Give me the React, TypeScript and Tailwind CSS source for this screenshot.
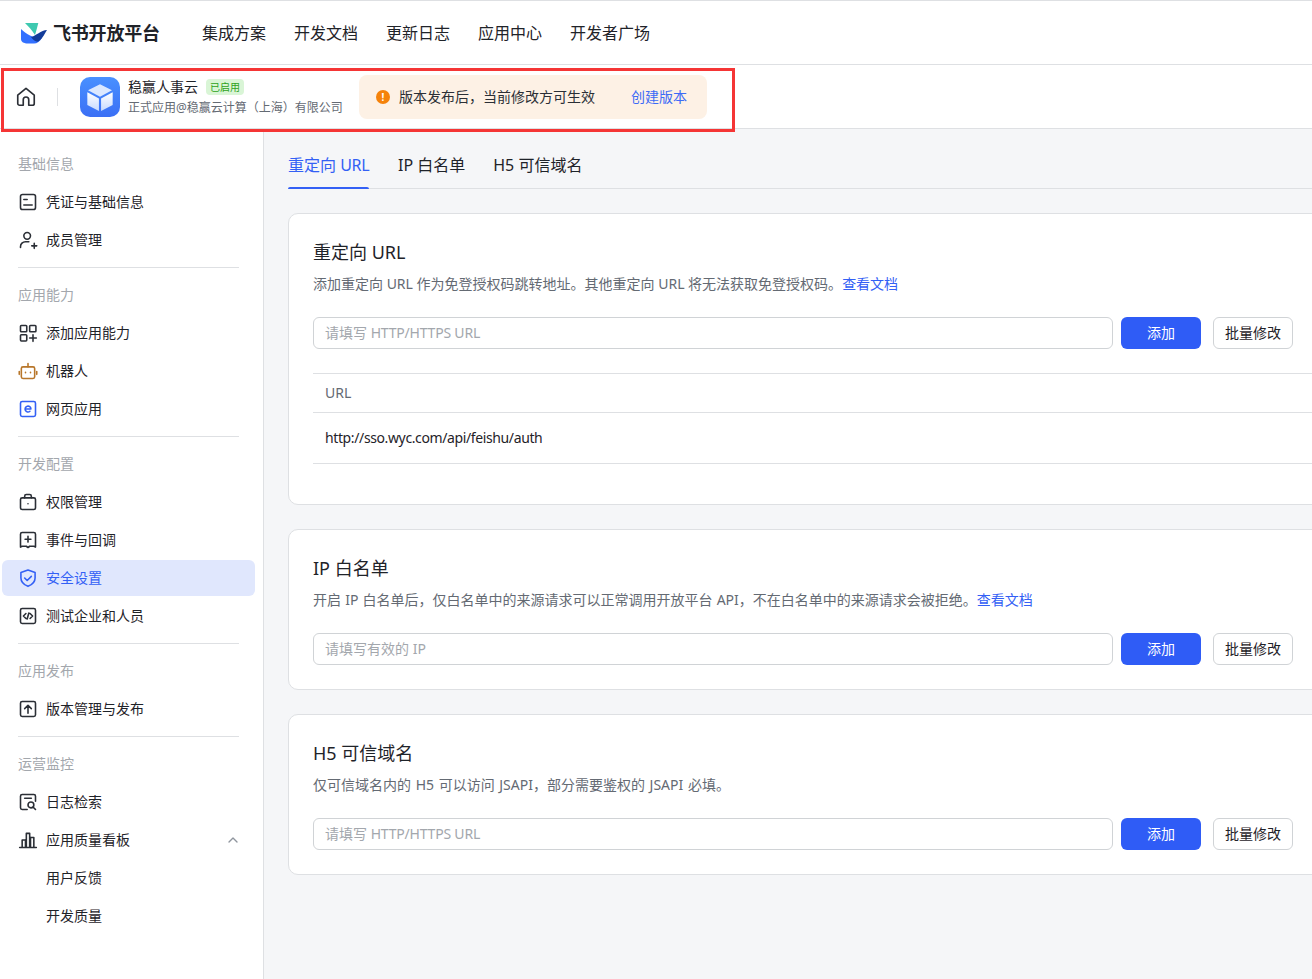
import type { ReactNode } from 'react'
import { ChevronUp } from 'lucide-react'

type Item = { label: string; icon?: ReactNode; active?: boolean; chevron?: boolean }
type Section = { title: string; items: Item[] }

function Glyph({ children, className = 'text-[#2b2f36]' }: { children: ReactNode; className?: string }) {
  return (
    <svg viewBox="0 0 24 24" fill="none" stroke="currentColor" strokeWidth="1.900" strokeLinecap="round" strokeLinejoin="round" className={`w-5 h-5 shrink-0 ${className}`}>
      {children}
    </svg>
  )
}

const sections: Section[] = [
  {
    title: '基础信息',
    items: [
      { label: '凭证与基础信息', icon: <Glyph><rect x="3" y="3" width="18" height="18" rx="2.500" /><path d="M7 9h4M7 15.500h10" /></Glyph> },
      { label: '成员管理', icon: <Glyph><circle cx="11" cy="7" r="4" /><path d="M3 21v-1a6 6 0 0 1 6-6h4M16.500 19h6M19.500 16v6" /></Glyph> },
    ],
  },
  {
    title: '应用能力',
    items: [
      { label: '添加应用能力', icon: <Glyph><rect x="3" y="3" width="7.500" height="7.500" rx="1" /><rect x="14" y="3" width="7.500" height="7.500" rx="1" /><rect x="3" y="14" width="7.500" height="7.500" rx="1" /><path d="M14 18h8M18 14v8" /></Glyph> },
      { label: '机器人', icon: <Glyph className="text-[#b8762a]"><rect x="4" y="7" width="16" height="14" rx="2" /><path d="M12 3v4M1.500 12.500v3.500M22.500 12.500v3.500M9 13.500v.5M15 13.500v.5" /></Glyph> },
      { label: '网页应用', icon: <Glyph className="text-[#3360f5]"><rect x="3" y="3" width="18" height="18" rx="2" /><path d="M8.500 12h7a3.500 3.500 0 1 0-1.200 2.700" /></Glyph> },
    ],
  },
  {
    title: '开发配置',
    items: [
      { label: '权限管理', icon: <Glyph><rect x="3" y="7" width="18" height="14" rx="2" /><path d="M8 7V5a2 2 0 0 1 2-2h4a2 2 0 0 1 2 2v2M12 14v.01" /></Glyph> },
      { label: '事件与回调', icon: <Glyph><path d="M5 3h14a2 2 0 0 1 2 2v15.500l-2-1h-5l-2 1.500-2-1.500H5l-2 1V5a2 2 0 0 1 2-2zM12 7.500v7M8.500 11h7" /></Glyph> },
      { label: '安全设置', active: true, icon: <Glyph className="text-[#3360f5]"><path d="M12 2.500l8.500 3V12c0 5-3.500 8-8.500 10-5-2-8.500-5-8.500-10V5.500zM8 12l3 3 5-5" /></Glyph> },
      { label: '测试企业和人员', icon: <Glyph><rect x="3" y="3" width="18" height="18" rx="2" /><path d="M9.500 9l-3 3 3 3M14.500 9l3 3-3 3M13 8.500l-2 7" /></Glyph> },
    ],
  },
  {
    title: '应用发布',
    items: [
      { label: '版本管理与发布', icon: <Glyph><rect x="3" y="3" width="18" height="18" rx="2" /><path d="M12 17V8M8 11.500l4-4 4 4" /></Glyph> },
    ],
  },
  {
    title: '运营监控',
    items: [
      { label: '日志检索', icon: <Glyph><path d="M21 11V5a2 2 0 0 0-2-2H5a2 2 0 0 0-2 2v14a2 2 0 0 0 2 2h6M8 7.500h8" /><circle cx="15.500" cy="15.500" r="3.500" /><path d="M18 18l3 3" /></Glyph> },
      { label: '应用质量看板', chevron: true, icon: <Glyph><path d="M2 21h20M5 21v-9h4v9M10 21V4h4v17M15 21V9h4v12" /></Glyph> },
      { label: '用户反馈' },
      { label: '开发质量' },
    ],
  },
]

function NavRow({ item }: { item: Item }) {
  return (
    <div className={`ml-[2px] w-[253px] h-9 flex items-center pl-4 pr-[14px] gap-2 rounded-[6px] text-sm ${item.active ? 'bg-[#e0e7fd] text-[#3360f5]' : 'text-[#1f2329]'}`}>
      {item.icon ?? <span className="w-5 shrink-0" />}
      <span className="flex-1">{item.label}</span>
      {item.chevron && <ChevronUp className="w-4 h-4 text-[#8f959e]" />}
    </div>
  )
}

function Sidebar() {
  return (
    <aside className="w-[264px] shrink-0 bg-white border-r border-[#dee0e3] pt-6">
      {sections.map((section, i) => (
        <div key={section.title}>
          {i > 0 && <div className="ml-[18px] w-[221px] h-px bg-[#dee0e3] mt-[9px] mb-4" />}
          <div className="pl-[18px] h-[22px] leading-[22px] text-sm text-[#a3a7ad] mb-[9px]">{section.title}</div>
          <div className="flex flex-col gap-0.5">
            {section.items.map((item) => (
              <NavRow key={item.label} item={item} />
            ))}
          </div>
        </div>
      ))}
    </aside>
  )
}

function AddRow({ placeholder }: { placeholder: ReactNode }) {
  return (
    <div className="flex mt-[22px] text-sm">
      <div className="w-[800px] h-8 px-[11px] flex items-center bg-white border border-[#d0d3d6] rounded-[6px] text-[#a3a7ad] whitespace-pre">{placeholder}</div>
      <button className="ml-2 w-20 h-8 rounded-[6px] bg-[#2f5cf6] text-white">添加</button>
      <button className="ml-3 w-20 h-8 rounded-[6px] bg-white border border-[#d0d3d6] text-[#1f2329]">批量修改</button>
    </div>
  )
}

function Card({ title, desc, placeholder, children }: { title: string; desc: ReactNode; placeholder: ReactNode; children?: ReactNode }) {
  return (
    <section className="w-[1100px] bg-white border border-[#dee0e3] rounded-[10px] pt-6 pb-6 pl-6">
      <h2 className="h-7 leading-7 text-lg text-[#1f2329]">{title}</h2>
      <p className="mt-[7px] h-[22px] leading-[22px] text-sm text-[#646a73]">{desc}</p>
      <AddRow placeholder={placeholder} />
      {children}
    </section>
  )
}

const DocLink = () => <a className="text-[#3360f5]">查看文档</a>
const UrlHint = () => <>请填写 <span className="tracking-[-0.2px]">HTTP/HTTPS URL</span></>

export default function App() {
  return (
    <div className="relative w-[1312px] h-[979px] overflow-hidden flex flex-col bg-[#f5f6f8] font-['Noto_Sans','Noto_Sans_CJK_SC',sans-serif]">
      {/* top nav */}
      <header className="h-[65px] shrink-0 bg-white border-t border-b border-[#dee0e3] flex items-center">
        <svg viewBox="0 0 26 22" className="ml-[21px] w-[26px] h-[22px] shrink-0">
          <path d="M4 1h13.300c-1 4-2 8-3.300 12C11 8 7 4 4 1z" fill="#3ec9b0" />
          <path d="M0 7v10c0 3 3 4.500 7 4.500h6c3 0 6-2 8-6C15 17 7 14 0 7z" fill="#3370ff" />
          <path d="M10 15c5-1 10-7 16-7-2 3-4 8-8 11-2 2-6-1-8-4z" fill="#133c9a" />
        </svg>
        <span className="ml-[6px] w-[106px] text-lg font-bold tracking-[-0.2px] text-[#1f2329] whitespace-nowrap">飞书开放平台</span>
        <nav className="ml-[43px] flex gap-7 text-base text-[#1f2329]">
          <span>集成方案</span>
          <span>开发文档</span>
          <span>更新日志</span>
          <span>应用中心</span>
          <span>开发者广场</span>
        </nav>
      </header>

      {/* app bar */}
      <div className="h-[64px] shrink-0 bg-white border-b border-[#dee0e3] flex items-center">
        <svg viewBox="0 0 24 24" fill="none" stroke="#2b2f36" strokeWidth="1.800" strokeLinejoin="round" className="ml-[15px] w-[22px] h-[22px] shrink-0">
          <path d="M3 10l9-7.500L21 10v9a2 2 0 0 1-2 2h-4v-6a3 3 0 0 0-6 0v6H5a2 2 0 0 1-2-2z" />
        </svg>
        <div className="ml-[20px] w-px h-[18px] bg-[#dee0e3]" />
        <div className="ml-[22px] w-10 h-10 rounded-[10px] bg-gradient-to-b from-[#4a90ff] to-[#3b6ff5] flex items-center justify-center shrink-0">
          <svg viewBox="0 0 24 24" className="w-8 h-8">
            <defs>
              <linearGradient id="cubeFace" x1="0" y1="0" x2="0" y2="1">
                <stop offset="0" stopColor="#ffffff" />
                <stop offset="1" stopColor="#c6daff" />
              </linearGradient>
            </defs>
            <path d="M12 2.500l9 4.500-9 4.800L3 7z" fill="#dbe8ff" />
            <path d="M2.500 8.500l8.700 4.700v9.300L2.500 18z" fill="url(#cubeFace)" />
            <path d="M21.500 8.500l-8.700 4.700v9.300l8.700-4.500z" fill="url(#cubeFace)" />
          </svg>
        </div>
        <div className="ml-2 w-[231px] shrink-0">
          <div className="flex items-center h-5">
            <span className="text-sm text-[#1f2329]">稳赢人事云</span>
            <span className="ml-2 w-[38px] h-4 rounded-[4px] bg-[#d9f5d6] text-[10px] leading-4 text-center text-[#2ea121]">已启用</span>
          </div>
          <div className="mt-[2px] text-xs leading-[18px] text-[#646a73] whitespace-nowrap">正式应用@稳赢云计算（上海）有限公司</div>
        </div>
        <div className="w-[348px] h-11 rounded-lg bg-[#fdf1e5] flex items-center pl-[17px] text-sm">
          <span className="w-[14px] h-[14px] rounded-full bg-[#f5820a] text-white text-[10px] font-bold leading-[14px] text-center">!</span>
          <span className="ml-[9px] text-[#2b2f36]">版本发布后，当前修改方可生效</span>
          <a className="ml-9 text-[#3d6bf6]">创建版本</a>
        </div>
      </div>

      <div className="flex flex-1 min-h-0">
        <Sidebar />
        <main className="flex-1 min-w-0 pl-6 overflow-hidden">
          <div className="h-[60px] border-b border-[#dee0e3] flex gap-7 text-base whitespace-nowrap">
            <div className="w-[81px] mr-px pt-[25px] leading-[22px] text-[#3360f5] relative">
              重定向 <span className="tracking-[-0.3px]">URL</span>
              <span className="absolute left-0 right-0 bottom-[-1px] h-[2px] bg-[#3360f5] rounded-t-sm" />
            </div>
            <div className="pt-[25px] leading-[22px] text-[#1f2329]">IP 白名单</div>
            <div className="pt-[25px] leading-[22px] text-[#1f2329]">H5 可信域名</div>
          </div>

          <div className="mt-6 flex flex-col gap-6">
            <Card
              title="重定向 URL"
              desc={<>添加重定向 URL 作为免登授权码跳转地址。其他重定向 URL 将无法获取免登授权码。<DocLink /></>}
              placeholder={<UrlHint />}
            >
              <div className="mt-6 text-sm text-[#1f2329]">
                <div className="h-10 px-3 flex items-center border-t border-b border-[#dee0e3] text-[#646a73]">URL</div>
                <div className="h-[51px] px-3 flex items-center border-b border-[#dee0e3] tracking-[-0.38px]">http://sso.wyc.com/api/feishu/auth</div>
              </div>
              <div className="h-4" />
            </Card>
            <Card
              title="IP 白名单"
              desc={<span className="[word-spacing:0.5px]">开启 IP 白名单后，仅白名单中的来源请求可以正常调用开放平台 API，不在白名单中的来源请求会被拒绝。<DocLink /></span>}
              placeholder="请填写有效的 IP"
            />
            <Card
              title="H5 可信域名"
              desc={<span className="[word-spacing:1px]">仅可信域名内的 H5 可以访问 JSAPI，部分需要鉴权的 JSAPI 必填。</span>}
              placeholder={<UrlHint />}
            />
          </div>
        </main>
      </div>

      {/* red annotation around the app bar */}
      <div className="absolute left-[1px] top-[68px] w-[734px] h-[64px] border-[3px] border-[#f53535] pointer-events-none" />
    </div>
  )
}
